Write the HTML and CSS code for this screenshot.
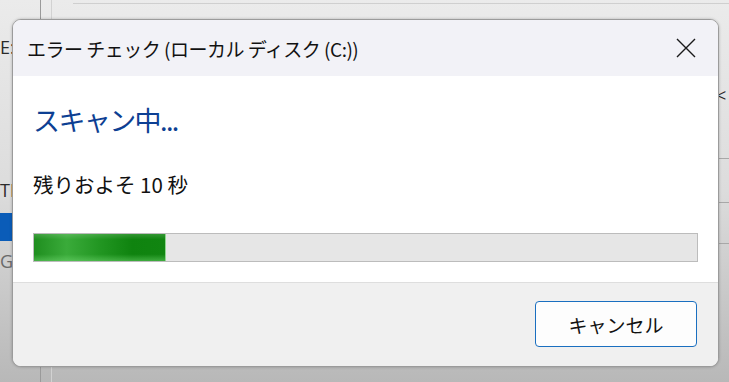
FILE: index.html
```html
<!DOCTYPE html>
<html lang="ja">
<head>
<meta charset="utf-8">
<link rel="stylesheet" href="styles.css">
</head>
<body>
<div class="desktop">
  <div class="bg-window">
    <div class="bg-top-line"></div>
    <div class="bg-vline bg-vline-a"></div>
    <div class="bg-vline bg-vline-b"></div>
    <span class="bg-text bg-e">E:)</span>
    <span class="bg-text bg-tm">TM</span>
    <div class="bg-select"></div>
    <span class="bg-text bg-g">G</span>
    <span class="bg-text bg-arrow">&lt;</span>
    <div class="bg-hline bg-h1"></div>
    <div class="bg-hline bg-h2"></div>
    <div class="bg-hline bg-h3"></div>
  </div>

  <div class="dialog">
    <div class="titlebar">
      <span class="title">エラー チェック (ローカル ディスク (C:))</span>
      <button class="close" aria-label="閉じる">
        <svg width="20" height="20" viewBox="0 0 20 20"><path d="M1 1 L19 19 M19 1 L1 19" stroke="#1a1a1a" stroke-width="1.4" fill="none"/></svg>
      </button>
    </div>
    <div class="content">
      <div class="heading">スキャン中...</div>
      <div class="remaining">残りおよそ 10 秒</div>
      <div class="progress"><div class="fill" style="width:19.8%"></div></div>
    </div>
    <div class="footer">
      <button class="btn">キャンセル</button>
    </div>
  </div>
</div>
</body>
</html>
```

FILE: styles.css
```css
html, body {
  margin: 0;
  padding: 0;
}
body {
  width: 729px;
  height: 382px;
  overflow: hidden;
  font-family: "Noto Sans CJK JP", "Noto Sans", sans-serif;
}
.desktop {
  position: relative;
  width: 729px;
  height: 382px;
  background: linear-gradient(to bottom, #ebebeb 0%, #dcdcdc 50%, #b8b8b8 100%);
}
.bg-window {
  position: absolute;
  inset: 0;
}
.bg-top-line {
  position: absolute;
  left: 73px;
  right: 0;
  top: 3px;
  height: 1px;
  background: #cfcfcf;
}
.bg-vline {
  position: absolute;
  top: 0;
  bottom: 0;
  width: 1px;
}
.bg-vline-a { left: 40px; background: #9a9a9a; }
.bg-vline-b { left: 51px; background: #d2d2d2; }
.bg-text {
  position: absolute;
  font-family: "Open Sans", "Liberation Sans", sans-serif;
  font-size: 18px;
  color: #2a2a2a;
  line-height: 1;
}
.bg-e { left: 0; top: 38px; }
.bg-tm { left: 0; top: 181px; }
.bg-g { left: 0; top: 252px; color: #6a6a6a; }
.bg-arrow { left: 716px; top: 86px; font-size: 18px; }
.bg-select {
  position: absolute;
  left: 0;
  top: 213px;
  width: 14px;
  height: 28px;
  background: #0a5cb8;
}
.bg-hline {
  position: absolute;
  left: 719px;
  right: 0;
  height: 1px;
  background: #a8a8a8;
}
.bg-h1 { top: 158px; }
.bg-h2 { top: 202px; }
.bg-h3 { top: 243px; }

.dialog {
  position: absolute;
  left: 12px;
  top: 19px;
  width: 707px;
  height: 348px;
  box-sizing: border-box;
  border: 1px solid #9b9b9b;
  border-radius: 9px;
  overflow: hidden;
  display: flex;
  flex-direction: column;
  background: #ffffff;
  box-shadow: 0 0 3px rgba(0,0,0,0.25);
}
.titlebar {
  height: 56px;
  flex: none;
  background: #f2f2f7;
  display: flex;
  align-items: center;
  justify-content: space-between;
  padding-left: 14px;
}
.title {
  font-size: 19px;
  color: #111111;
  letter-spacing: -0.5px;
}
.close {
  width: 46px;
  height: 56px;
  border: 0;
  background: transparent;
  display: flex;
  align-items: center;
  justify-content: center;
  padding: 0;
  margin-right: 9px;
}
.content {
  flex: 1;
  background: #ffffff;
  padding: 24px 20px 0 20px;
  display: flex;
  flex-direction: column;
}
.heading {
  font-size: 27px;
  line-height: 40px;
  color: #0d3f93;
  letter-spacing: -1.6px;
}
.remaining {
  margin-top: 29px;
  font-size: 20.5px;
  line-height: 30px;
  color: #111111;
}
.progress {
  margin-top: 34px;
  height: 29px;
  box-sizing: border-box;
  border: 1px solid #bcbcbc;
  background: #e6e6e6;
}
.fill {
  height: 100%;
  background:
    linear-gradient(to bottom, rgba(255,255,255,0.15) 0%, rgba(255,255,255,0) 20%, rgba(0,0,0,0) 75%, rgba(120,220,120,0.45) 100%),
    linear-gradient(to right, #1f8e1f 0%, #3aab3a 25%, #229622 50%, #0f830f 75%, #118511 100%);
  border-right: 1px solid #8fd68f;
}
.footer {
  flex: none;
  height: 84px;
  box-sizing: border-box;
  border-top: 1px solid #dedede;
  background: #f0f0f0;
  display: flex;
  align-items: flex-start;
  justify-content: flex-end;
  padding: 18px 21px 0 0;
}
.btn {
  width: 162px;
  height: 46px;
  border: 1px solid #1a6fc0;
  border-radius: 4px;
  background: #fdfdfd;
  font-family: "Noto Sans CJK JP", "Noto Sans", sans-serif;
  font-size: 19px;
  color: #111111;
  padding: 0;
}
```
